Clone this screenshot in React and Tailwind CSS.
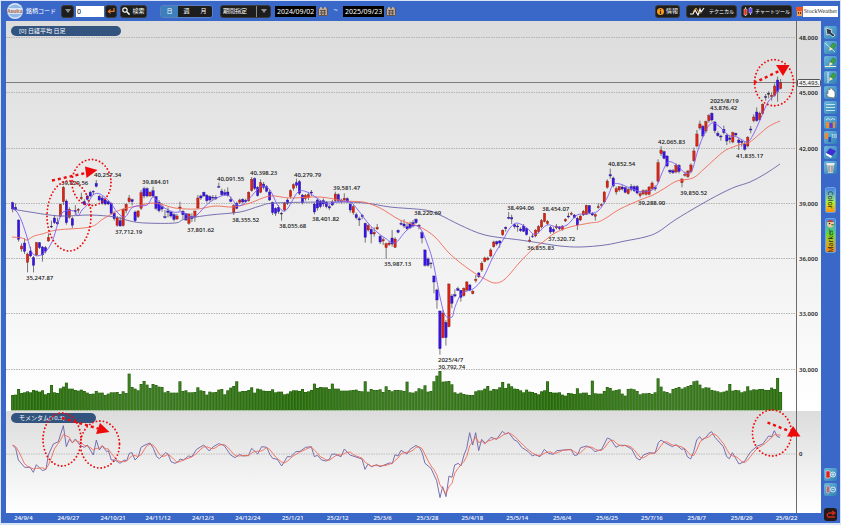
import React from "react";

/* ------------------------------------------------------------------ */
/* Data. Price rows are "high open/close-top open/close-bottom low kind" */
/* in thirds of a chart unit; kind: u = up, d = down, k = doji.          */
/* ------------------------------------------------------------------ */

const CANDLE_BLOCKS = [
  {
    base: 150,
    rows: `155 158 177 187 d|160 172 179 182 d|208 210 268 275 d|280 288 297 305 u|265 279 304 312 d|308 312 337 367 u|290 303 318 322 d|318 323 346 367 d|276 278 315 318 u|276 278 293 297 d|288 291 315 335 d|288 293 304 310 d|250 262 273 275 u|212 229 231 234 k|195 204 218 222 d|203 217 222 224 d|161 163 199 202 u|108 112 155 165 u|148 153 218 224 d|172 178 202 206 u|200 206 226 234 d|165 182 185 195 d|174 178 181 190 u|128 142 146 150 u|148 155 163 166 d|135 138 148 152 d|122 127 138 142 d|121 124 126 135 d|90 100 109 112 d|135 139 150 154 d|138 144 160 164 d|146 150 162 166 d|150 155 162 165 d|157 160 190 194 d|184 190 206 212 d|198 204 226 230 u|200 212 228 230 d|175 178 227 230 u|160 163 182 190 u|135 144 155 158 u|146 149 155 166 d|182 186 212 216 d|180 183 200 204 u|120 128 175 180 u|110 116 138 145 d|112 116 138 142 d|125 126 138 140 u|110 122 138 142 d|138 140 175 180 d|150 157 182 187 d|160 170 177 185 d|180 200 203 206 d|172 183 187 202 d|184 186 198 203 d|190 194 208 214 d|192 198 207 210 u|155 171 176 183 u|180 184 194 207 d|190 191 210 213 d|190 192 220 224 u|190 200 206 216 d|182 183 201 215 u|135 144 174 177 u|134 138 144 150 d|125 127 138 140 d|132 136 152 158 d|136 140 150 154 d|135 142 144 150 d|135 142 146 150 d|98 110 112 113 d|116 123 134 137 d|118 128 134 138 d|112 126 136 140 d|140 149 154 157 d|162 167 188 195 u|155 160 175 178 d|146 150 157 162 u|145 148 156 160 d|146 151 155 158 d|124 127 152 155 u|81 88 122 125 u|82 86 115 120 d|108 112 137 140 d|88 98 127 130 u|96 102 112 118 d|105 110 124 127 d|120 126 150 153 d`,
  },
  {
    base: 150,
    rows: `155 157 188 195 d|172 175 190 198 d|165 172 185 192 d|185 190 192 212 k|156 160 180 184 u|145 150 160 165 d|118 122 140 145 u|100 104 115 122 u|86 98 106 114 d|90 95 130 135 d|132 135 158 163 d|132 136 146 152 u|128 134 143 150 u|120 126 129 138 d|158 162 186 193 d|146 150 174 182 d|150 153 170 175 d|145 152 162 170 d|153 157 170 175 d|165 170 174 180 d|150 156 165 168 d|125 132 152 156 u|130 134 152 156 d|146 150 154 160 d|130 145 150 154 u|142 146 154 158 d|160 162 180 188 d|165 170 188 194 u|188 194 203 208 d|200 206 210 228 d|192 196 200 208 d|218 220 262 278 d|222 226 240 245 u|232 238 252 280 d|232 247 252 260 u|222 232 237 240 u|255 259 276 282 d|262 269 273 285 u|278 281 293 326 u|274 279 284 288 u|240 264 282 290 d|262 267 292 294 u|238 241 247 250 d|212 220 223 226 d|208 222 228 234 d|218 230 236 240 d|215 222 234 236 d|210 218 228 232 d|205 208 218 222 d|222 226 230 238 d|244 248 264 280 d|298 300 346 350 d|322 327 346 350 d|337 339 341 355 k|376 378 396 430 d|416 420 450 476 d|482 483 596 614 d|480 489 563 565 u|510 517 563 587 d|400 402 530 532 u|432 438 460 475 d|418 434 438 442 d|410 416 421 423 d|420 421 442 455 d|412 415 437 440 u|393 396 420 425 u|402 405 420 424 d|420 424 431 433 u|375 388 392 398 u|366 369 380 384 d|334 340 360 366 u|320 324 334 337 u|320 324 329 332 u|295 300 318 322 u|272 276 290 293 u|272 275 282 287 d|270 273 279 293 d|238 241 254 258 u|229 232 236 245 d|186 202 205 208 d|194 203 207 222 d|222 224 230 236 d|222 228 231 245 d|232 237 242 246 d`,
  },
  {
    base: 80,
    rows: `432 438 454 456 d|444 446 464 467 d|470 480 485 488 u|462 468 470 474 d|448 450 468 472 u|435 440 455 460 u|417 422 441 445 u|399 400 425 427 u|420 424 431 435 u|438 442 456 461 d|442 448 455 460 d|432 438 444 448 u|438 441 446 450 d|436 438 448 452 u|415 418 423 426 u|398 408 411 415 d|395 400 403 406 u|402 405 413 415 d|410 415 435 450 d|406 408 420 424 u|390 394 405 408 u|374 376 403 405 u|375 377 398 402 d|396 400 405 408 d|400 404 409 422 u|370 380 383 386 u|370 374 376 380 u|333 336 366 370 u|298 303 322 326 u|266 284 288 296 d|290 294 318 322 d|320 326 336 344 u|318 320 330 335 u|315 321 327 332 d|320 323 337 340 d|324 328 341 344 u|312 320 328 334 d|316 320 332 336 d|315 320 339 343 d|335 341 347 353 u|328 332 342 346 u|328 332 343 347 u|318 321 343 346 u|304 309 326 330 u|316 322 327 333 d|238 248 304 308 u|198 210 221 228 u|212 215 235 238 d|226 228 258 262 d|268 271 276 282 d|267 272 278 282 d|250 256 276 280 u|252 256 274 280 d|294 297 308 322 u|275 283 286 290 u|270 273 290 294 u|250 255 275 280 u|203 213 242 246 u|150 162 198 202 u|122 132 144 150 u|135 139 168 172 d|122 125 153 160 u|102 107 122 128 u|97 100 120 125 d|123 126 152 160 d|154 160 167 170 d|164 168 171 182 d|137 148 158 163 d|160 166 183 195 d|168 174 178 190 d|155 158 186 190 u|158 160 165 168 d|175 180 188 210 d|178 184 188 200 d|185 192 208 212 d|168 172 198 202 u|138 147 150 160 d|103 111 122 127 u|82 96 122 125 d|95 100 119 122 u|70 73 100 103 u|42 50 52 62 k|34 40 43 55 k|38 46 50 62 u|10 18 47 50 u|-10 0 35 65 d|-3 8 26 28 u`,
  },
];

const CANDLES = CANDLE_BLOCKS.flatMap(({ base, rows }) =>
  rows.split("|").map((row) => {
    const [high, top, bottom, low, kind] = row.split(" ");
    const y = (v) => base + Number(v) / 3;
    return { high: y(high), top: y(top), bottom: y(bottom), low: y(low), kind };
  })
);

const BAR_COUNT = CANDLES.length;
const STEP = 768 / (BAR_COUNT - 1);
const barX = (i) => 12.6 + i * STEP;

const VOLUME_BLOCKS = [
  [0, "105 104 87 99 97 94 97 90 92 95 91 103 99 75 97 99 85 80 68 86 86 90 92 89 93 98 102 101 93 98 98 105 101 97 97 96 102 94 99 41 81 86 91 72 63 74 84 72 75 80 81 97 93 98 98 98 64 93 91 97 97 96 82 91 93 104 95 97 96 89 87 103 91 83 78 64 95 93 93 90 82 98 86 88 92 93 93"],
  [87, "88 97 95 95 103 101 94 91 91 93 87 96 94 90"],
  [101, "71 84 81 82 82"],
  [106, "87 71 86 86 92 92 92 91 90 89 93 94"],
  [118, "64 95 87 90 90 88 96"],
  [125, "79 90 94 90 90 91 93"],
  [132, "65 97 98 94 85 88"],
  [138, "76 95 93 64 47"],
  [143, "33 65 64 63 73 97 101 98 102 104 105 105 94 91 91 86"],
  [159, "78 92 87 88 82"],
  [164, "66 84 71 79 86 87 91 97 89 95 96 99 103"],
  [177, "94 91 64 96 98 98 97 104 107 99 100"],
  [188, "102 85 100 98 98 105"],
  [194, "62 100 101 101 93 81 84 92 90 88 101 107 87 86 88 93 103 100 100 99 102 97"],
  [216, "55 80 94 96 100 87 84 81 86 82 78 75 64 62"],
  [230, "74 85 82 83 90 92 94 97 95 92"],
  [240, "72 92 90 91 97 94"],
  [246, "79 91 88 89 87 87 90 90 83 87"],
  [256, "54 96"],
];

const VOLUMES = Array(BAR_COUNT).fill(92);
VOLUME_BLOCKS.forEach(([start, values]) =>
  values.split(" ").forEach((v, k) => {
    if (start + k < BAR_COUNT) VOLUMES[start + k] = Number(v);
  })
);

const parsePoints = (text) => text.split(" ").map((p) => p.split(",").map(Number));

const SHORT_MA = parsePoints(
  "12.5,209 17,212 22,222 27,237 33,254 43,254 52,242 58,223 63,212 74,211 78,216 82,210 87,205 93,195 100,194 110,202 117,212 125,217 133,207 147,205 153,197 160,205 173,212 182,212 190,217 197,215 210,202 227,195 237,205 245,203 257,190 263,186 270,190 277,204 283,211 288,208 298,192 307,192 317,198 327,204 337,202 350,202 358,210 368,223 377,232 385,238 395,243 405,232 413,226 420,228 427,243 433,262 440,297 445,315 452,317 455,307 462,293 473,289 483,278 493,257 503,240 510,228 517,223 527,228 533,234 538,233 547,225 557,227 567,225 577,215 587,214 598,211 607,198 613,185 620,184 630,188 643,192 655,188 662,173 668,162 677,165 685,173 692,170 698,150 705,132 712,123 720,127 728,135 737,137 747,142 753,135 760,120 768,102 775,95 780,88"
);
const MID_MA = parsePoints(
  "12,237 22,238 27,240 34,236 42,234 57,230 90,227 103,219 120,210 137,206 155,203 175,208 197,209 215,206 233,207 250,203 270,196 290,198 320,197 345,201 363,202 380,208 400,220 420,227 435,237 450,254 470,270 485,279 495,283 505,279 520,262 533,249 543,242 555,233 570,227 590,223 598,222 606,218 620,209 640,200 653,195 665,188 677,181 693,178 705,168 723,152 733,147 742,144 750,142 768,127 780,121"
);
const LONG_MA = parsePoints(
  "12,209 30,212 60,216 90,215 115,217 130,221 145,223 175,223 185,219 210,215 240,212 260,206 275,203 330,202 365,203 390,207 425,210 440,215 460,225 485,235 520,240 540,243 560,246 580,247 605,245 625,241 645,237 658,232 675,220 700,205 720,194 735,187 750,182 765,174 780,164"
);

const MOMENTUM_BLOCKS = [
  [0, "38,255 47,265 55,300 74,322 90,322 100,337 109,314 127,332 138,328 145,285 160,252 175,245 190,197 199,260 208,238 217,248 226,237 240,256 253,262 262,255 280,285 289,240 298,270 307,258 320,275 325,272 334,300 345,300 360,310 372,300 380,302 388,280 396,278 405,300 415,290 423,262 435,255 450,249 460,265 470,290 478,296 497,278 504,282 513,305 525,310 535,305 540,297 550,300 566,288 575,290 590,268 611,255 628,273 640,260 656,251 672,256 692,285 705,293 719,283 728,288 745,287 755,265 773,282 785,260 800,262"],
  [810, "0,284 8,295 22,298 35,318 52,290 62,290 78,275 90,274 107,262 124,260 133,290 142,286 155,300 168,303 178,298 185,283 195,282 213,290 223,267 240,285 276,297 285,328 294,312 305,320 320,314 330,320 358,309 367,310 375,284 384,288 393,271 411,282 420,268 438,256 450,265 457,280 465,310 483,325 500,362 510,413 518,380 528,410 537,348 546,352 554,315 565,310 573,318 582,285 590,265 599,218 608,255 617,218 626,272 635,238 646,250 663,232 680,238 697,214 707,222 716,218 733,240 742,244 755,262 775,275 787,288 795,284"],
  [1620, "0,290 13,268 25,280 40,283 50,272 93,268 103,286 112,285 122,263 140,258 155,265 165,275 185,268 202,234 212,238 228,262 238,256 255,256 275,267 290,295 300,300 310,285 328,278 345,280 355,248 363,240 378,250 397,260 408,254 425,268 433,266 442,290 452,297 461,275 470,240 479,230 487,240 498,232 507,220 515,215 525,232 550,260 560,290 568,296 577,278 597,312 613,305 632,275 652,258 668,252 686,228 695,230 703,212 712,230 720,232"],
];
const MOMENTUM = MOMENTUM_BLOCKS.flatMap(([offset, text]) =>
  parsePoints(text).map(([x, y]) => [(x + offset) / 3, 360 + y / 3])
);

const sample = (points, x) => {
  const k = points.findIndex((p) => p[0] >= x);
  if (k <= 0) return k === 0 ? points[0][1] : points[points.length - 1][1];
  const [x0, y0] = points[k - 1];
  const [x1, y1] = points[k];
  return y0 + ((y1 - y0) * (x - x0)) / (x1 - x0);
};
const MOMENTUM_AT_BAR = CANDLES.map((_, i) => sample(MOMENTUM, barX(i)));
const SIGNAL = MOMENTUM_AT_BAR.map((_, i) => {
  const win = MOMENTUM_AT_BAR.slice(Math.max(0, i - 2), i + 1);
  return [barX(i), win.reduce((a, b) => a + b, 0) / win.length];
});

const polyline = (points) => points.map((p) => p.join(",")).join(" ");
const smoothPath = (pts) =>
  pts.reduce((d, p, i) => {
    if (i === 0) return `M${p[0]} ${p[1]}`;
    const a = pts[Math.max(0, i - 2)];
    const b = pts[i - 1];
    const n = pts[Math.min(pts.length - 1, i + 1)];
    return `${d}C${b[0] + (p[0] - a[0]) / 6} ${b[1] + (p[1] - a[1]) / 6} ${p[0] - (n[0] - b[0]) / 6} ${p[1] - (n[1] - b[1]) / 6} ${p[0]} ${p[1]}`;
  }, "");

const PRICE_LABELS = [
  [26, 280, "35,247.87"], [61, 185, "39,829.56"], [94, 177, "40,257.34"], [115, 234, "37,712.19"],
  [142, 184, "39,884.01"], [187, 232, "37,801.62"], [217, 181, "40,091.55"], [232, 222, "38,355.52"],
  [250, 175, "40,398.23"], [294, 177, "40,279.79"], [279, 228, "38,055.68"], [312, 221, "38,401.82"],
  [333, 190, "39,581.47"], [414, 215, "38,220.69"], [384, 266, "35,987.13"], [438, 362, "2025/4/7"],
  [438, 369, "30,792.74"], [507, 210, "38,494.06"], [527, 250, "36,855.83"], [542, 211, "38,454.07"],
  [548, 241, "37,320.72"], [608, 166, "40,852.54"], [638, 205, "39,288.90"], [658, 144, "42,065.83"],
  [680, 195, "39,850.52"], [710, 103, "2025/8/19"], [710, 110, "43,876.42"], [736, 158, "41,835.17"],
];
const GRID = [[37, "48,000"], [92, "45,000"], [148, "42,000"], [203, "39,000"], [258, "36,000"], [313, "33,000"], [369, "30,000"]];
const DATES = ["24/9/4", "24/9/27", "24/10/21", "24/11/12", "24/12/3", "24/12/24", "25/1/21", "25/2/12", "25/3/6", "25/3/28", "25/4/18", "25/5/14", "25/6/4", "25/6/25", "25/7/16", "25/8/7", "25/8/29", "25/9/22"];
const CIRCLES = [
  [69, 216, 22, 35], [91.5, 182.5, 19.5, 23], [774, 82.7, 19.5, 23],
  [62, 439.5, 19, 26.5], [100, 444.5, 19.5, 23.5], [772, 433, 19.5, 23],
];
const ARROWS = [
  { line: [52, 180.5, 86, 173], head: "85,166.5 97.5,170 86.5,178" },
  { line: [754, 83, 779, 71], head: "776,65 789.5,65 783,76" },
  { line: [62, 418, 98, 428.5], head: "100,423 109.5,432 96,434" },
  { line: [767.5, 422.5, 789, 431], head: "793,426 800.5,436.5 787,436.5" },
];

/* ------------------------------------------------------------------ */

function Chart() {
  return (
    <svg
      viewBox="6 21 815 492"
      role="img"
      aria-label="日経平均 日足"
      className="block h-auto w-full font-['Noto_Sans','Noto_Sans_CJK_JP',sans-serif] text-[6px]"
    >
      <defs>
        <linearGradient id="panel" x1="0" y1="0" x2="0" y2="1">
          <stop offset="0" stopColor="#dcdcdc" />
          <stop offset="1" stopColor="#ffffff" />
        </linearGradient>
      </defs>
      <rect x="6" y="21" width="815" height="390" fill="url(#panel)" />
      <rect x="6" y="411" width="815" height="102" fill="url(#panel)" />

      {GRID.map(([y, text]) => (
        <g key={text}>
          <line x1="6" x2="796" y1={y + 0.5} y2={y + 0.5} stroke="#b4b4b4" strokeDasharray="1.5 1" />
          <text x="799" y={y + 3} fill="#222" className="font-semibold">{text}</text>
        </g>
      ))}
      <line x1="6" x2="796" y1="454" y2="454" stroke="#bcbcbc" strokeDasharray="1.5 1" />
      <text x="799" y="456" fill="#222" className="font-semibold">0</text>

      <line x1="6" x2="796" y1="82.5" y2="82.5" stroke="#7d7d7d" />
      <line x1="796.5" x2="796.5" y1="21" y2="513" stroke="#6b6b6b" />
      <rect x="797.5" y="79.5" width="23" height="7" rx="1" fill="#f4f4f4" stroke="#555" />
      <text x="799" y="85" fill="#222">45,493.</text>

      {VOLUMES.map((v, i) => (
        <g key={i}>
          <rect x={barX(i) - STEP / 2} y={360 + v / 3} width={STEP} height={50.3 - v / 3} fill="#1f5f08" />
          <rect x={barX(i) - 1} y={360.6 + v / 3} width="1.8" height={49.7 - v / 3} fill="#3f7f22" />
        </g>
      ))}

      {CANDLES.map((c, i) => (
        <g key={i}>
          <line x1={barX(i)} x2={barX(i)} y1={c.high} y2={c.low} stroke="#444" strokeWidth="0.7" />
          <rect
            x={barX(i) - 1.2}
            y={c.top}
            width="2.4"
            height={Math.max(0.7, c.bottom - c.top)}
            fill={c.kind === "u" ? "#dc2414" : c.kind === "d" ? "#3a12e8" : "#222"}
            stroke={c.kind === "u" ? "#6c1408" : "#1c1070"}
            strokeWidth="0.3"
          />
        </g>
      ))}

      <path d={smoothPath(LONG_MA)} fill="none" stroke="#6a62a8" strokeWidth="0.9" />
      <path d={smoothPath(MID_MA)} fill="none" stroke="#f06a58" strokeWidth="0.9" />
      <path d={smoothPath(SHORT_MA)} fill="none" stroke="#7c5cf4" strokeWidth="0.9" />

      {PRICE_LABELS.map(([x, y, text]) => (
        <text key={text} x={x} y={y} fill="#111" className="font-medium">{text}</text>
      ))}

      <polyline points={polyline(MOMENTUM)} fill="none" stroke="#6a62a8" strokeWidth="0.9" />
      <polyline points={polyline(SIGNAL)} fill="none" stroke="#f06a58" strokeWidth="0.9" />

      <rect x="11" y="26" width="110" height="10" rx="5" fill="#32547f" />
      <text x="19" y="33" fill="#fff">[0] 日経平均 日足</text>
      <rect x="11" y="413" width="85" height="10" rx="5" fill="#32547f" />
      <text x="19" y="420" fill="#fff">モメンタム(10,3)</text>

      {CIRCLES.map(([cx, cy, rx, ry]) => (
        <ellipse key={cx} cx={cx} cy={cy} rx={rx} ry={ry} fill="none" stroke="#ee0a0a" strokeWidth="1.9" strokeLinecap="round" strokeDasharray="0 3.6" />
      ))}
      {ARROWS.map(({ line: [x1, y1, x2, y2], head }) => (
        <g key={head}>
          <line x1={x1} y1={y1} x2={x2} y2={y2} stroke="#ee0a0a" strokeWidth="2.4" strokeDasharray="3 3" />
          <polygon points={head} fill="#ee0a0a" />
        </g>
      ))}
    </svg>
  );
}

const dark = "flex h-[13px] items-center rounded-[3px] border border-[#3a3a3a] bg-[#1d1d1d] text-white";

function Chevron() {
  return (
    <svg viewBox="0 0 6 4" className="h-1 w-1.5" aria-hidden="true">
      <path d="M0 0h6L3 4z" fill="#8f8f8f" />
    </svg>
  );
}

function CalendarButton({ label }) {
  return (
    <button type="button" aria-label={label} className="h-[9px] w-[10px]">
      <svg viewBox="0 0 10 9" className="block h-full w-full">
        <rect x=".5" y="1" width="9" height="7.5" rx="1" fill="#b9a79c" stroke="#5d5048" />
        <path d="M2 3.6h6M2 6h6M3.6 3v5M6.4 3v5" stroke="#4d423c" strokeWidth=".8" />
        <path d="M3 0v2M7 0v2" stroke="#eee" />
      </svg>
    </button>
  );
}

function Header() {
  return (
    <header className="flex h-5 items-center pl-1.5 pr-0.5 text-[6px] leading-none">
      <svg viewBox="0 0 16 16" className="size-4 shrink-0" role="img" aria-label="Asuka">
        <circle cx="8" cy="8" r="8" fill="#d8e6f6" />
        <path d="M1 5Q8-2 15 5zM1 11q7 7 14 0z" fill="#8fb8e6" />
        <text x="8" y="10" textAnchor="middle" fontSize="5" fontWeight="700" fill="#e8902c" stroke="#5d62b8" strokeWidth=".2">Asuka</text>
      </svg>
      <label htmlFor="code" className="ml-[3px] w-[35px] whitespace-nowrap text-[6px] text-white">銘柄コード</label>
      <button type="button" aria-label="銘柄一覧" className={`${dark} w-[13px] justify-center`}><Chevron /></button>
      <input id="code" defaultValue="0" className="ml-0.5 h-[11px] w-7 bg-white px-px text-[7px] text-black" />
      <button type="button" aria-label="決定" className={`${dark} ml-px w-3 justify-center`}>
        <svg viewBox="0 0 8 6" className="h-1.5 w-2"><path d="M7 0v3.4H2M3.6 1.4 1.4 3.4l2.2 2" fill="none" stroke="#e8772a" strokeWidth="1.2" /></svg>
      </button>
      <button type="button" className={`${dark} ml-[3px] w-[27px] justify-center gap-0.5`}>
        <svg viewBox="0 0 8 8" className="size-2"><circle cx="3" cy="3" r="2.2" fill="none" stroke="#fff" strokeWidth="1.2" /><path d="m4.8 4.8 2.8 2.8" stroke="#fff" strokeWidth="1.5" /></svg>
        検索
      </button>
      <div className="ml-[13px] flex h-[13px] overflow-hidden rounded-[3px] border border-[#5b7fc0] text-white">
        <button type="button" aria-pressed="true" className="w-[17px] bg-[#3d7fbb]">日</button>
        <button type="button" className="w-[17px] bg-[#1d1d1d]">週</button>
        <button type="button" className="w-[17px] bg-[#1d1d1d]">月</button>
      </div>
      <div className="relative ml-[7px] flex">
        <select aria-label="期間" className={`${dark} w-[51px] appearance-none pl-0.5`}>
          <option>期間指定</option>
        </select>
        <span className="pointer-events-none absolute inset-y-px right-0 flex w-[15px] items-center justify-center border-l border-[#8a8a8a]"><Chevron /></span>
      </div>
      <input aria-label="開始日" defaultValue="2024/09/02" className="ml-1 h-[11px] w-[41px] bg-black px-0.5 text-[7px] text-white" />
      <span className="ml-0.5 flex"><CalendarButton label="開始日を選択" /></span>
      <span className="mx-1 w-[7px] pb-0.5 text-center text-[8px] text-[#c9d8f4]">~</span>
      <input aria-label="終了日" defaultValue="2025/09/23" className="h-[11px] w-[41px] bg-black px-0.5 text-[7px] text-white" />
      <span className="ml-0.5 flex"><CalendarButton label="終了日を選択" /></span>
      <div className="ml-auto flex items-center">
        <button type="button" className={`${dark} w-[25px] justify-center gap-0.5`}>
          <svg viewBox="0 0 7 7" className="size-[7px]"><circle cx="3.5" cy="3.5" r="3.5" fill="#f59a1c" /><path d="M3.5 1v1.2M3.5 3v3" stroke="#402000" strokeWidth="1.1" /></svg>
          情報
        </button>
        <button type="button" className={`${dark} ml-1.5 w-[51px] justify-center gap-1 text-[5px]`}>
          <svg viewBox="0 0 16 9" className="h-[9px] w-4"><path d="M1 7h3l2-4 3 5 2-6 1 3 3-4" fill="none" stroke="#fff" strokeWidth="1.1" /><path d="m4 5 3-4 4 6" fill="none" stroke="#e6a23a" /></svg>
          テクニカル
        </button>
        <button type="button" className={`${dark} ml-1 w-[51px] justify-center gap-0.5 text-[5px]`}>
          <svg viewBox="0 0 10 9" className="h-[9px] w-2.5"><path d="M2.5 0v9M7.5 0v8" stroke="#ddd" strokeWidth=".8" /><path d="M1 2h3v6H1z" fill="#e0301e" stroke="#fff" strokeWidth=".4" /><path d="M6 1h3v5H6z" fill="#5a3cf0" stroke="#fff" strokeWidth=".4" /></svg>
          チャートツール
        </button>
        <a href="#stockweather" className="ml-1 flex h-[11px] items-center bg-white font-['Liberation_Serif',serif] text-[6px] text-[#333]">
          <svg viewBox="0 0 7 11" className="h-[11px] w-[7px]"><path d="M0 0h7v11H0z" fill="#4a6cc8" /><path d="M0 1h7v4H0z" fill="#e8532a" /><path d="M1 5h5v5H1z" fill="#f2a24a" /><path d="M2 6h1v2H2zM4 6h1v2H4z" fill="#8c1d10" /></svg>
          <span className="w-[35px] whitespace-nowrap text-center">StockWeather</span>
        </a>
      </div>
    </header>
  );
}

const pencil = (
  <g>
    <path d="M6 6l3-4 3 2-3 4z" fill="#3da63a" stroke="#1f6a2a" strokeWidth=".4" />
    <path d="M6 6l3 2-4 2z" fill="#f6eab0" />
  </g>
);

const TOOLS = [
  ["選択", <path d="m2 2 6 2-1 2 4 3-2 2-4-3-2 1z" fill="#2c3e50" stroke="#fff" strokeWidth=".7" />],
  ["トレンドライン", <g><path d="m1 2 10 9" stroke="#e6f2f8" strokeWidth=".8" />{pencil}</g>],
  ["水平線", <g><path d="M1 10.500h11" stroke="#f2f2d8" />{pencil}</g>],
  ["垂直線", <g><path d="M4 1v11" stroke="#e6f2f8" />{pencil}</g>],
  ["移動", <path d="M4 11 2 7l2 .5V4q1-2 2 0V2q1-1 2 1l1 1q1 0 1 1 1 0 1 2v3l-1 2z" fill="#fff" stroke="#555" strokeWidth=".6" />],
  ["本数線", <path d="M2 3.5h9M2 6.5h9M2 9.5h9" stroke="#d4ebf6" strokeWidth=".9" />],
  ["期間", <g><path d="M2 6h3v6H2zM9 6h2v6H9z" fill="#f08a2a" /><path d="M5.5 7h3v5h-3z" fill="#5a3cd0" /><path d="M2 4q2-3 4.5 0Q9 1 11 4" fill="none" stroke="#e6f2f8" strokeWidth=".8" /></g>],
  ["日数", <g><path d="M1 2h3v6H1z" fill="#f08a2a" /><path d="M4.5 6h2.500v5H4.500z" fill="#2c4ac0" /><text x="7" y="7" fontSize="5" fill="#fff">10</text></g>],
  ["消しゴム", <g><path d="m2 7 4-5 6 3-4 5z" fill="#3d2fd0" /><path d="m2 7 6 3-1 2-5-3z" fill="#fff" /></g>],
  ["全消去", <g><path d="M3 4h7l-1 8H4z" fill="#c8c8c8" /><path d="M2.5 2h8v2h-8z" fill="#eee" /><path d="M5 5v6M8 5v6" stroke="#777" strokeWidth=".8" /></g>],
];

function ToolButton({ label, children }) {
  return (
    <button type="button" aria-label={label} className="size-[13px] rounded-[2px] bg-linear-to-br from-[#6db8da] to-[#2f7fb4]">
      <svg viewBox="0 0 13 13" className="block size-[13px]">{children}</svg>
    </button>
  );
}

const rainbow = "flex w-[11px] items-center rounded-[2px] border border-[#6aa7d8] bg-linear-to-b from-[#4a7df0] text-[7px] leading-none text-[#16331c]";

function Sidebar() {
  return (
    <aside className="flex w-[19px] shrink-0 flex-col items-center pt-[5px] pb-0.5">
      <div className="flex flex-col gap-0.5">
        {TOOLS.map(([label, icon]) => <ToolButton key={label} label={label}>{icon}</ToolButton>)}
      </div>
      <button type="button" className={`${rainbow} via-[#b4ee20] via-60% to-[#ff8a10] mt-[13px] h-[26px] justify-center [writing-mode:vertical-rl]`}>Color</button>
      <button type="button" className={`${rainbow} via-[#5fdc2f] via-45% to-[#ff7a10] mt-[5px] h-[35px] flex-col gap-px`}>
        <svg viewBox="0 0 9 9" className="size-[9px] shrink-0" aria-hidden="true"><circle cx="4.5" cy="5" r="3.5" fill="#efc79a" /><path d="M1 3q3-4 7 0z" fill="#c23b22" /><circle cx="3.5" cy="4.5" r=".8" fill="#222" /><path d="M5 5h4L6 7z" fill="#3c9c3c" /></svg>
        <span className="rotate-180 [writing-mode:vertical-rl]">Marker</span>
      </button>
      <div className="mt-auto flex flex-col gap-0.5">
        <ToolButton label="拡大"><path d="M2 3h4v7H2z" fill="#e0201a" stroke="#fff" strokeWidth=".5" /><circle cx="9" cy="6.5" r="2.5" fill="none" stroke="#e8f4fa" strokeWidth=".9" /><path d="M7.5 6.5h3M9 5v3" stroke="#e8f4fa" strokeWidth=".8" /></ToolButton>
        <ToolButton label="縮小"><path d="M3 3h2v7H3z" fill="#e0201a" stroke="#fff" strokeWidth=".5" /><circle cx="9" cy="6.5" r="2.5" fill="none" stroke="#e8f4fa" strokeWidth=".9" /><path d="M7.5 6.5h3" stroke="#e8f4fa" strokeWidth=".8" /></ToolButton>
      </div>
      <button type="button" aria-label="元に戻す" className="mt-3 size-[13px] rounded-[3px] bg-[#241a1a]">
        <svg viewBox="0 0 13 13" className="block size-[13px]"><path d="M10 5H5Q2 6 4 9h7M8 3l3 2-3 2" fill="none" stroke="#d02a1c" strokeWidth="1.3" /></svg>
      </button>
    </aside>
  );
}

export default function App() {
  return (
    <div className="min-h-screen bg-[#d9e3f6] p-px pb-0.5 font-['Noto_Sans','Noto_Sans_CJK_JP',sans-serif]">
      <div className="bg-[#3968c8]">
        <Header />
        <div className="flex">
          <main className="min-w-0 grow">
            <div className="pl-[5px]"><Chart /></div>
            <ol className="grid h-2.5 grid-cols-[repeat(18,minmax(0,1fr))] items-center pr-3 text-center text-[6px] leading-none font-medium text-white">
              {DATES.map((d) => <li key={d}>{d}</li>)}
            </ol>
          </main>
          <Sidebar />
        </div>
      </div>
    </div>
  );
}
